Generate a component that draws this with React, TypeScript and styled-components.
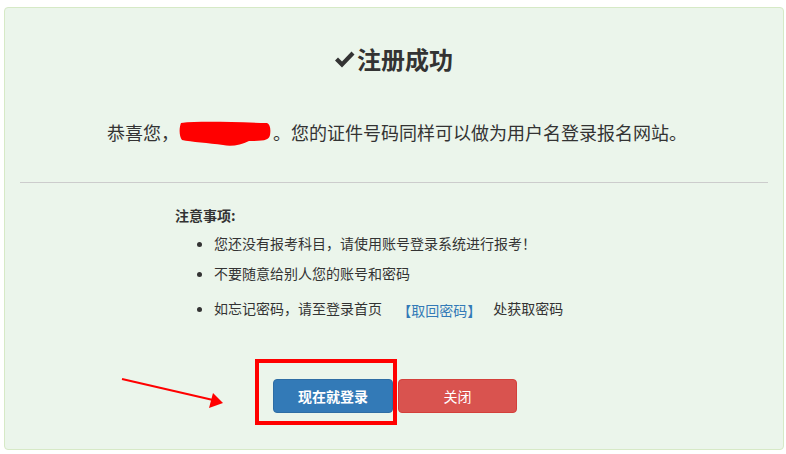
import React from 'react';
import styled, { createGlobalStyle } from 'styled-components';

const GlobalStyle = createGlobalStyle`
  html, body {
    margin: 0;
    padding: 0;
    background: #fff;
  }
  body {
    font-family: "Liberation Sans", "Noto Sans CJK SC", sans-serif;
    color: #333;
  }
`;

const Page = styled.div`
  position: relative;
  width: 786px;
  height: 454px;
  padding: 7px 0 0 4px;
  box-sizing: border-box;
`;

const Panel = styled.div`
  width: 780px;
  height: 443px;
  box-sizing: border-box;
  padding: 15px;
  background: #ebf5eb;
  border: 1px solid #d6e9c6;
  border-radius: 4px;
  display: flex;
  flex-direction: column;
`;

const Title = styled.h3`
  margin: 19px 0 0;
  display: flex;
  justify-content: center;
  align-items: center;
  gap: 2px;
  font-size: 24px;
  line-height: 34px;
  font-weight: 700;
  color: #333;
  font-family: "Noto Sans CJK SC", sans-serif;
`;

const Greeting = styled.p`
  margin: 43px 0 0;
  height: 26px;
  display: flex;
  justify-content: center;
  align-items: center;
  font-size: 18px;
  line-height: 26px;
  color: #333;
  font-family: "Noto Sans CJK SC", sans-serif;
  padding-left: 6px;
`;

const Divider = styled.hr`
  margin: 37px 0 0;
  border: 0;
  border-top: 1px solid #ccc;
  height: 0;
`;

const Notes = styled.div`
  width: 440px;
  margin: 22px auto 0;
  padding-left: 2px;
  font-family: "Noto Sans CJK SC", sans-serif;
  font-size: 14px;
`;

const NotesTitle = styled.div`
  font-weight: 700;
  line-height: 20px;
  font-size: 14px;
`;

const NoteList = styled.ul`
  margin: 8px 0 0;
  padding-left: 39px;
  list-style: disc;
`;

const NoteItem = styled.li`
  line-height: 20px;
  margin-bottom: 10px;
  font-size: 14px;
  color: #333;
`;

const LinkButton = styled.a`
  display: inline-block;
  vertical-align: middle;
  padding: 7px 12px;
  color: #337ab7;
  text-decoration: none;
  line-height: 20px;
`;

const Actions = styled.div`
  margin-top: 42px;
  display: flex;
  justify-content: center;
  gap: 5px;
  padding-left: 2px;
`;

const Button = styled.button<{ $tone: 'primary' | 'danger'; $w: number }>`
  width: ${(p) => p.$w}px;
  height: 34px;
  border-radius: 4px;
  border: 1px solid ${(p) => (p.$tone === 'primary' ? '#2e6da4' : '#d43f3a')};
  background: ${(p) => (p.$tone === 'primary' ? '#337ab7' : '#d9534f')};
  color: #fff;
  font-family: "Noto Sans CJK SC", sans-serif;
  font-size: 14px;
  font-weight: ${(p) => (p.$tone === 'primary' ? 700 : 400)};
  padding: 0;
`;

const Highlight = styled.div`
  position: absolute;
  left: 255px;
  top: 359px;
  width: 142px;
  height: 66px;
  box-sizing: border-box;
  border: 4px solid #ff0000;
  pointer-events: none;
`;

const ArrowSvg = styled.svg`
  position: absolute;
  left: 115px;
  top: 372px;
`;

const Check = () => (
  <svg width="20" height="17" viewBox="0 0 20 17">
    <polygon points="0,9.5 3,6.5 7,10.5 16.5,0.5 19.5,3.5 7,16.5" fill="#333" />
  </svg>
);

const Redaction = () => (
  <svg width="92" height="26" viewBox="0 0 92 26" style={{ margin: '2px 2px -2px 0', flexShrink: 0 }}>
    <path
      d="M2 2 C20 0 50 1 88 2 C91 3 92 8 91 14 C90 19 86 20 70 20 C62 24 52 26 44 24 C30 22 12 21 3 19 C0 15 0 7 2 2 Z"
      fill="#ff0000"
    />
  </svg>
);

const App: React.FC = () => {
  return (
    <Page>
      <GlobalStyle />
      <Panel>
        <Title>
          <Check />
          注册成功
        </Title>
        <Greeting>
          恭喜您，
          <Redaction />
          。您的证件号码同样可以做为用户名登录报名网站。
        </Greeting>
        <Divider />
        <Notes>
          <NotesTitle>注意事项:</NotesTitle>
          <NoteList>
            <NoteItem>您还没有报考科目，请使用账号登录系统进行报考！</NoteItem>
            <NoteItem>不要随意给别人您的账号和密码</NoteItem>
            <NoteItem>
              如忘记密码，请至登录首页 <LinkButton href="#">【取回密码】</LinkButton>处获取密码
            </NoteItem>
          </NoteList>
        </Notes>
        <Actions>
          <Button $tone="primary" $w={120}>现在就登录</Button>
          <Button $tone="danger" $w={119}>关闭</Button>
        </Actions>
      </Panel>
      <Highlight />
      <ArrowSvg width="115" height="40" viewBox="0 0 115 40">
        <line x1="7" y1="7" x2="98" y2="28" stroke="#ff0000" strokeWidth="2" />
        <polygon points="108,31 94,36 98,21" fill="#ff0000" />
      </ArrowSvg>
    </Page>
  );
};

export default App;
